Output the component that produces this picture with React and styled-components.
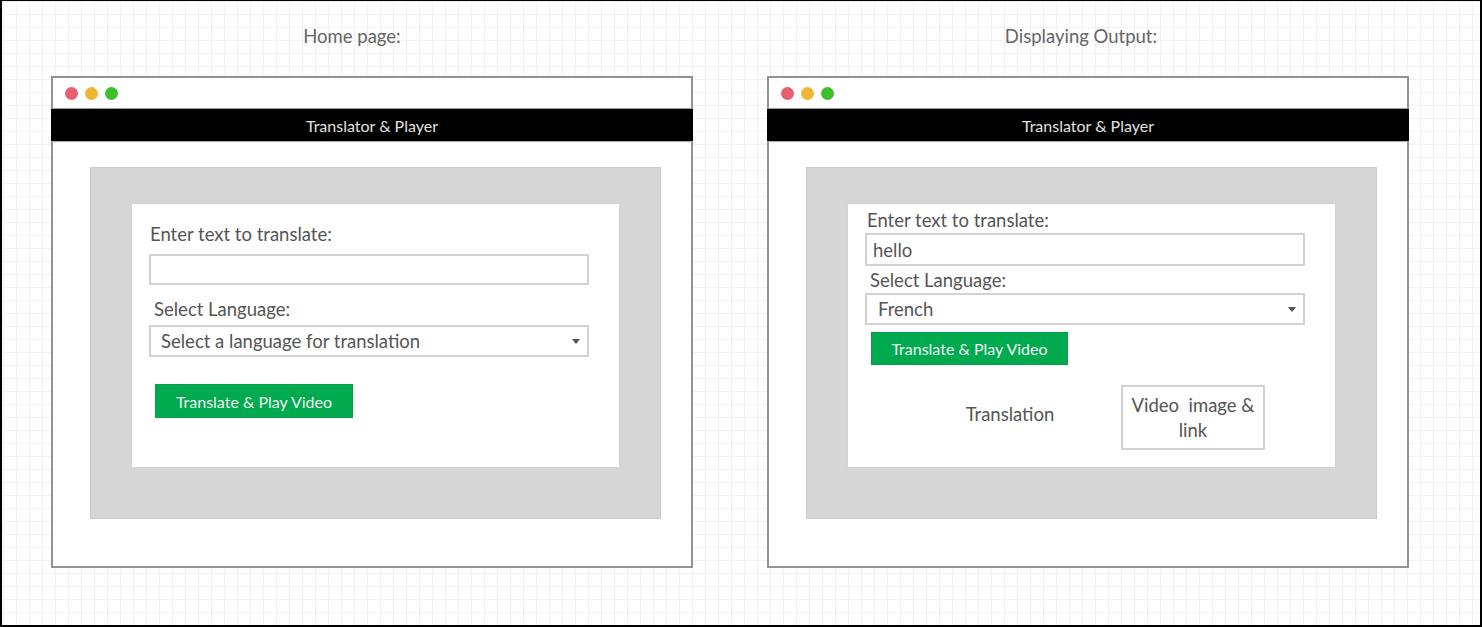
import React from 'react'
import styled, { createGlobalStyle } from 'styled-components'

const GlobalStyle = createGlobalStyle`
    html, body {
        margin: 0;
        padding: 0;
        background: #fff;
    }
    * {
        box-sizing: border-box;
    }
`;

const Canvas = styled.div`
    width: 1482px;
    height: 627px;
    border: 2px solid #000;
    border-top-width: 1px;
    padding-left: 49px;
    display: flex;
    gap: 74px;
    font-family: Lato, "Open Sans", sans-serif;
    background-color: #fff;
    background-image:
        linear-gradient(to right, #f1f1f1 1px, transparent 1px),
        linear-gradient(to bottom, #f1f1f1 1px, transparent 1px);
    background-size: 13px 13px;
    background-position: 1px 0;
`;

const Board = styled.section`
    width: 642px;
    display: flex;
    flex-direction: column;
`;

const BoardTitle = styled.div`
    height: 75px;
    padding-top: 25px;
    padding-right: ${p => p.$shift}px;
    line-height: 20px;
    font-size: 18.5px;
    color: #666;
    text-align: center;
`;

const Window = styled.div`
    width: 642px;
    height: 492px;
    border: 2px solid #929292;
    background: #fff;
    display: flex;
    flex-direction: column;
`;

const DotsRow = styled.div`
    height: 30px;
    padding-left: 12px;
    display: flex;
    align-items: center;
    gap: 7px;
`;

const Dot = styled.span`
    width: 13px;
    height: 13px;
    border-radius: 50%;
    background: ${p => p.$color};
`;

const TitleBar = styled.div`
    margin: 0 -2px;
    height: 34px;
    background: #000;
    border-top: 1px solid #9a9a9a;
    border-bottom: 1px solid #aaa;
    color: #e2e2e2;
    font-size: 16px;
    display: flex;
    align-items: center;
    justify-content: center;
`;

const Panel = styled.div`
    margin: 25px 0 0 37px;
    width: 571px;
    height: 352px;
    background: #d6d6d6;
    border: 1px solid #cbcbcb;
    padding: 34px 0 0 39px;
`;

const Card = styled.div`
    width: 491px;
    height: 267px;
    background: #fff;
    border: 2px solid #d4d4d4;
    padding-top: ${p => (p.$compact ? 5 : 19)}px;
    display: flex;
    flex-direction: column;
    align-items: flex-start;
`;

const FieldLabel = styled.div`
    margin-top: ${p => p.$top || 0}px;
    margin-left: ${p => p.$left}px;
    line-height: 22px;
    font-size: 18.5px;
    color: #555;
`;

const TextBox = styled.div`
    margin-top: ${p => p.$top}px;
    margin-left: 17px;
    width: 440px;
    height: ${p => p.$height}px;
    border: 2px solid #d2d2d2;
    padding-left: ${p => p.$pad}px;
    display: flex;
    align-items: center;
    justify-content: space-between;
    padding-right: 7px;
    font-size: 18.5px;
    color: #555;
`;

const Caret = styled.span`
    width: 0;
    height: 0;
    border-left: 4px solid transparent;
    border-right: 4px solid transparent;
    border-top: 5px solid #555;
`;

const GreenButton = styled.button`
    margin-top: ${p => p.$top}px;
    margin-left: 23px;
    width: ${p => p.$width}px;
    height: ${p => p.$height}px;
    border: 1px solid #0a9e4c;
    background: #00aa4f;
    color: #f2f2f2;
    font-family: inherit;
    font-size: 16px;
    padding: 0;
    cursor: pointer;
`;

const ResultRow = styled.div`
    margin-top: 20px;
    padding-left: 72px;
    display: flex;
    align-items: center;
`;

const ResultText = styled.div`
    width: 180px;
    margin-bottom: 7px;
    text-align: center;
    font-size: 18.5px;
    color: #555;
`;

const VideoBox = styled.div`
    margin-left: 21px;
    width: 144px;
    height: 65px;
    border: 2px solid #d2d2d2;
    display: flex;
    align-items: center;
    justify-content: center;
    text-align: center;
    line-height: 25px;
    font-size: 18.5px;
    color: #555;
`;

const BrowserFrame = ({ children }) => (
    <Window>
        <DotsRow>
            <Dot $color="#ea5f6f" />
            <Dot $color="#efb633" />
            <Dot $color="#3dc02b" />
        </DotsRow>
        <TitleBar>Translator &amp; Player</TitleBar>
        <Panel>{children}</Panel>
    </Window>
);

const HomeForm = () => (
    <Card>
        <FieldLabel $left={18}>Enter text to translate:</FieldLabel>
        <TextBox $top={9} $height={31} $pad={6} />
        <FieldLabel $top={13} $left={22}>Select Language:</FieldLabel>
        <TextBox $top={5} $height={32} $pad={10}>
            <span>Select a language for translation</span>
            <Caret />
        </TextBox>
        <GreenButton $top={27} $width={198} $height={34}>Translate &amp; Play Video</GreenButton>
    </Card>
);

const OutputForm = () => (
    <Card $compact>
        <FieldLabel $left={19}>Enter text to translate:</FieldLabel>
        <TextBox $top={2} $height={33} $pad={6}>
            <span>hello</span>
        </TextBox>
        <FieldLabel $top={3} $left={22}>Select Language:</FieldLabel>
        <TextBox $top={2} $height={32} $pad={11}>
            <span>French</span>
            <Caret />
        </TextBox>
        <GreenButton $top={7} $width={197} $height={33}>Translate &amp; Play Video</GreenButton>
        <ResultRow>
            <ResultText>Translation</ResultText>
            <VideoBox>Video&nbsp; image &amp;<br />link</VideoBox>
        </ResultRow>
    </Card>
);

const App = () => {
    return (
        <>
            <GlobalStyle />
            <Canvas>
                <Board>
                    <BoardTitle $shift={40}>Home page:</BoardTitle>
                    <BrowserFrame>
                        <HomeForm />
                    </BrowserFrame>
                </Board>
                <Board>
                    <BoardTitle $shift={14}>Displaying Output:</BoardTitle>
                    <BrowserFrame>
                        <OutputForm />
                    </BrowserFrame>
                </Board>
            </Canvas>
        </>
    )
}

export default App
